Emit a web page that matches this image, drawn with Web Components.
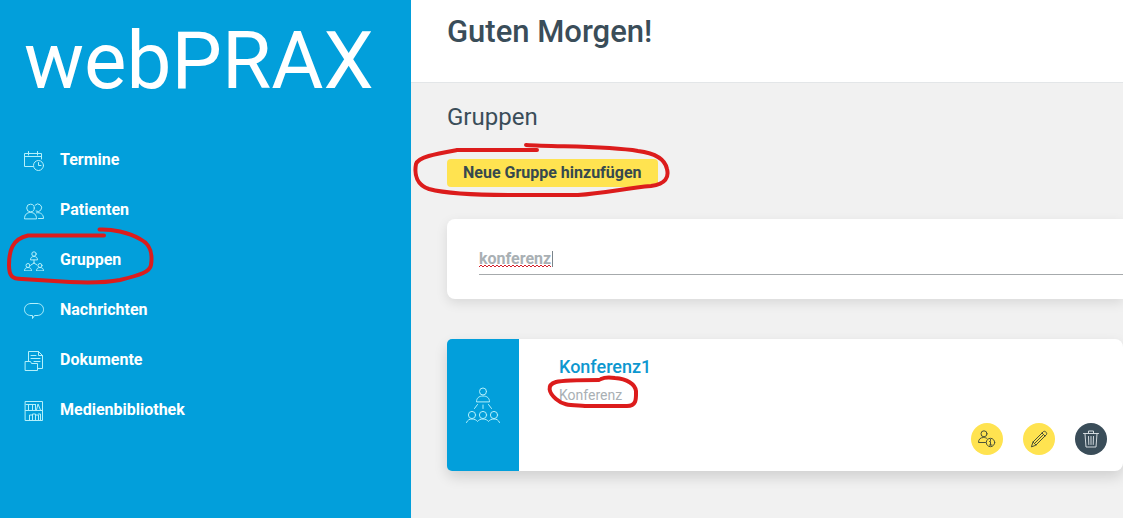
<!DOCTYPE html>
<html lang="de">
<head>
<meta charset="utf-8">
<meta name="viewport" content="width=device-width, initial-scale=1">
<title>webPRAX – Gruppen</title>
<style>
  :root {
    --blue: #029fdb;
    --yellow: #ffe350;
    --slate: #3a4d59;
    --muted: #a9b0b4;
    --ink: #dc1c1c;
  }
  body { margin: 0; font-family: Roboto, "Noto Sans", sans-serif; color: var(--slate); background: #f1f1f1; }
</style>
</head>
<body>
<prax-app></prax-app>

<script>
const icons = {
  calendar: ['0 0 20 20', '<path d="M9 15.500H.5V2.500h17V8M.5 5.500h17M4.500 .5v3.500M13.500 .5v3.500"/><circle cx="14.500" cy="14.500" r="5"/><path d="M14.500 11.500v3h2.500"/>'],
  people: ['0 0 20 20', '<circle cx="6.500" cy="7" r="3.800"/><path d="M11 4.200a3.800 3.800 0 1 1 1 5.900M.5 17.500c0-4 2.500-6 6-6s6 2 6 6zM12.500 11.800c4-.8 7 1.500 7 5.700h-5"/>'],
  group: ['0 0 20 20', '<circle cx="10" cy="3" r="2.200"/><path d="M6.500 8.500C6.500 6.500 8 5.500 10 5.500s3.500 1 3.500 3zM10 9v3.500M10 12l-3 2M10 12l3 2"/><circle cx="4" cy="14.500" r="2"/><path d="M.5 19.500c0-2 1.500-3 3.500-3s3.500 1 3.500 3z"/><circle cx="16" cy="14.500" r="2"/><path d="M12.500 19.500c0-2 1.500-3 3.500-3s3.500 1 3.500 3z"/>'],
  bubble: ['0 0 20 20', '<path d="M7 2.500h6c4 0 6.500 2.700 6.500 6s-2.500 6-6.500 6h-2.500L8.500 17.500v-3H7c-4 0-6.500-2.700-6.500-6s2.500-6 6.500-6z"/>'],
  document: ['0 0 20 20', '<path d="M4.500 10V.5h10l4 4v13h-5M14.500 .5v4h4M7 4.500h5M7 7.500h9M10 10.500h6M1.500 10.500h5l1 2h6v7h-12z"/>'],
  shelf: ['0 0 20 20', '<path d="M1.500 .5h17v19h-17zM1.500 9.500h17M2 3.500h9.500M4.500 3.500v6M8.500 3.500v6M11.500 3.500v6M12.500 9L14 3l2.500 6M5.500 19v-5h3M8.500 19v-6h3v6M11.500 14h3v5M14.500 13h2v6"/>'],
  conference: ['0 0 34 36', '<circle cx="17" cy="4.500" r="3.500"/><path d="M10.500 14.500c0-3.500 2.500-5.500 6.500-5.500s6.500 2 6.500 5.500zM11.500 17.500l-3 4M17 18v3.500M22.500 17.500l3 4"/><circle cx="6" cy="28" r="3.600"/><circle cx="17" cy="28" r="3.600"/><circle cx="28" cy="28" r="3.600"/><path d="M.5 35.500c1-2.500 3-3.500 5.500-3.500s4.500 1 5.500 2.500c1-1.500 3-2.500 5.500-2.500s4.500 1 5.500 2.500c1-1.500 3-2.500 5.500-2.500s4.500 1 5.500 3.500"/>'],
  userinfo: ['0 0 18 18', '<circle cx="6" cy="3.800" r="3"/><path d="M7.500 12.500h-7c0-3.300 2-5 5-5 1.500 0 2.500.3 3.500 1"/><circle cx="12.500" cy="12.500" r="4.200"/><path d="M11.500 11.500h1v3.500M11.500 15h2.500M12.500 9.500v1"/>'],
  pencil: ['0 0 18 18', '<path d="M1.500 16.500l1.500-4.500L13.500 1.500c1.500-1 4 1.500 3 3L6 15zM3 12l3 3M12 3l3 3M4.500 13.500L13.500 4.500"/>'],
  trash: ['0 0 18 18', '<path d="M1.500 3.500h15M6.500 3V1h5v2M3 4l1 13h10l1-13M6.500 6.500l.3 8M9 6.500v8M11.500 6.500l-.3 8"/>']
};

const define = (name, render) => customElements.define(name, class extends HTMLElement {
  connectedCallback() {
    if (!this.shadowRoot) this.attachShadow({ mode: 'open' }).innerHTML = render(this);
  }
});

define('prax-icon', el => {
  const [box, shape] = icons[el.getAttribute('name')];
  return `<style>
    :host { display: block; flex: none; width: 20px; }
    svg { display: block; width: 100%; fill: none; stroke: currentColor; stroke-width: 1; stroke-linejoin: round; stroke-linecap: round; }
  </style><svg viewBox="${box}" aria-hidden="true">${shape}</svg>`;
});

/* Hand-drawn marker stroke laid over the element that contains it. */
define('ink-mark', el => `<style>
    :host { display: block; position: absolute; z-index: 2; pointer-events: none; }
    svg { display: block; overflow: visible; fill: none; stroke: var(--ink); stroke-width: 4; stroke-linecap: round; stroke-linejoin: round; }
  </style><svg width="1" height="1" aria-hidden="true"><path d="${el.getAttribute('path')}"/></svg>`);

define('nav-item', el => `<style>
    :host { display: block; position: relative; }
    a { display: flex; align-items: center; gap: 16px; height: 50px; color: #fff; font-size: 16px; font-weight: 700; line-height: 20px; text-decoration: none; }
    prax-icon { color: #b4f0fb; margin-top: 2px; }
    ::slotted(ink-mark) { left: -24px; top: -7px; }
  </style><a href="#"><prax-icon name="${el.getAttribute('icon')}"></prax-icon><span>${el.getAttribute('label')}</span></a><slot></slot>`);

define('prax-sidebar', () => `<style>
    :host { display: block; box-sizing: border-box; background: var(--blue); padding: 13px 24px; }
    .logo { display: block; color: #fff; font-size: 80px; line-height: 96px; text-decoration: none; white-space: nowrap; }
    nav { margin-top: 26px; }
  </style>
  <a class="logo" href="#">webPRAX</a>
  <nav>
    <nav-item icon="calendar" label="Termine"></nav-item>
    <nav-item icon="people" label="Patienten"></nav-item>
    <nav-item icon="group" label="Gruppen"><ink-mark path="M104 7.500H28C12 11 9 23 9 37C9 48 12 51 22 51L70 54C90 55 104 55 120 52C140 47 150 44 151 37C153 24 150 16 140 11C128 4 112 1 99.500 1.500"></ink-mark></nav-item>
    <nav-item icon="bubble" label="Nachrichten"></nav-item>
    <nav-item icon="document" label="Dokumente"></nav-item>
    <nav-item icon="shelf" label="Medienbibliothek"></nav-item>
  </nav>`);

define('page-header', () => `<style>
    :host { display: block; background: #fff; border-bottom: 1px solid #e3e6e8; padding: 12px 36px 30px; }
    h1 { margin: 0; font-size: 31px; font-weight: 500; line-height: 40px; }
  </style><h1><slot></slot></h1>`);

define('primary-button', () => `<style>
    :host { display: block; position: relative; width: fit-content; }
    button { display: block; border: 0; border-radius: 4px; background: var(--yellow); color: #36494e; padding: 4px 16px; font: 700 16px/20px Roboto, sans-serif; }
    ::slotted(ink-mark) { left: 0; top: 0; }
  </style><button type="button"><slot></slot></button><slot name="mark"></slot>`);

define('group-search', () => `<style>
    :host { display: block; background: #fff; border-radius: 8px 0 0 8px; box-shadow: 0 4px 12px rgba(0,0,0,.1); padding: 24px 0 24px 32px; }
    .field { position: relative; }
    input { display: block; box-sizing: border-box; width: 100%; height: 32px; border: 0; border-bottom: 1px solid #a6aaac; border-radius: 0; outline: 0; padding: 0; background: none; color: var(--muted); font: 700 16px/20px Roboto, sans-serif; }
    svg { position: absolute; left: 0; top: 6px; fill: none; }
  </style>
  <div class="field">
    <input type="text" aria-label="Gruppe suchen" value="konferenz" spellcheck="false">
    <svg width="76" height="20" aria-hidden="true"><path stroke="#d5202c" d="M0 18${'l2 -2l2 2'.repeat(18)}"/><path stroke="#7b858b" d="M73.500 2v16"/></svg>
  </div>`);

define('round-button', el => `<style>
    :host { display: block; }
    button { display: grid; place-items: center; width: 32px; height: 32px; border: 0; border-radius: 50%; padding: 0; background: var(--fill, var(--yellow)); color: var(--line, #4b5238); }
    prax-icon { width: 18px; }
  </style><button type="button" aria-label="${el.getAttribute('label')}"><prax-icon name="${el.getAttribute('icon')}"></prax-icon></button>`);

define('group-card', () => `<style>
    :host { display: flex; min-height: 132px; background: #fff; border-radius: 8px; box-shadow: 0 6px 14px rgba(0,0,0,.14); }
    .tile { display: grid; place-items: center; width: 72px; background: var(--blue); border-radius: 5px 0 0 5px; color: #b4f0fb; }
    .tile prax-icon { width: 34px; }
    .body { flex: 1; display: flex; flex-direction: column; padding: 16px 16px 16px 40px; }
    h3 { margin: 0; color: #0d97cf; font-size: 18px; font-weight: 500; line-height: 24px; }
    .kind { position: relative; margin: 6px 0 0; color: var(--muted); font-size: 14px; line-height: 20px; }
    .kind ink-mark { left: 0; top: 0; }
    .actions { display: flex; justify-content: flex-end; gap: 20px; margin-top: auto; }
    .dark { --fill: var(--slate); --line: #d3dade; }
  </style>
  <div class="tile"><prax-icon name="conference"></prax-icon></div>
  <div class="body">
    <h3><slot name="title"></slot></h3>
    <p class="kind"><slot name="kind"></slot><ink-mark path="M40 -5C22 -5 5 -5 -3 -3C-13 0 -10 8 -3 14C5 21 12 20 26 21L68 21C78 21 77 13 77 6C76 -1 68 -6 56 -7C49 -8 44 -7 42 -6"></ink-mark></p>
    <div class="actions">
      <round-button icon="userinfo" label="Mitglieder"></round-button>
      <round-button icon="pencil" label="Bearbeiten"></round-button>
      <round-button class="dark" icon="trash" label="Löschen"></round-button>
    </div>
  </div>`);

define('groups-view', () => `<style>
    :host { display: block; padding: 18px 0 40px 36px; }
    h2 { margin: 0 0 26px; font-size: 24px; font-weight: 400; line-height: 32px; }
    group-search { margin: 32px 0 40px; }
  </style>
  <h2>Gruppen</h2>
  <primary-button>Neue Gruppe hinzufügen<ink-mark slot="mark" path="M90 -9H10C-12 -5 -29 -2 -31 5C-33 16 -30 26 -18 30C-3 34 24 36 61 36H131C158 34 180 29 204 27C219 25 222 18 220 10C218 0 207 -6 191 -8C160 -13 111 -12 79 -14"></ink-mark></primary-button>
  <group-search></group-search>
  <group-card><span slot="title">Konferenz1</span><span slot="kind">Konferenz</span></group-card>`);

define('prax-app', () => `<style>
    :host { display: grid; grid-template-columns: 411px minmax(0, 1fr); min-height: 100vh; }
    main { overflow: hidden; }
  </style>
  <prax-sidebar></prax-sidebar>
  <main><page-header>Guten Morgen!</page-header><groups-view></groups-view></main>`);
</script>
</body>
</html>
